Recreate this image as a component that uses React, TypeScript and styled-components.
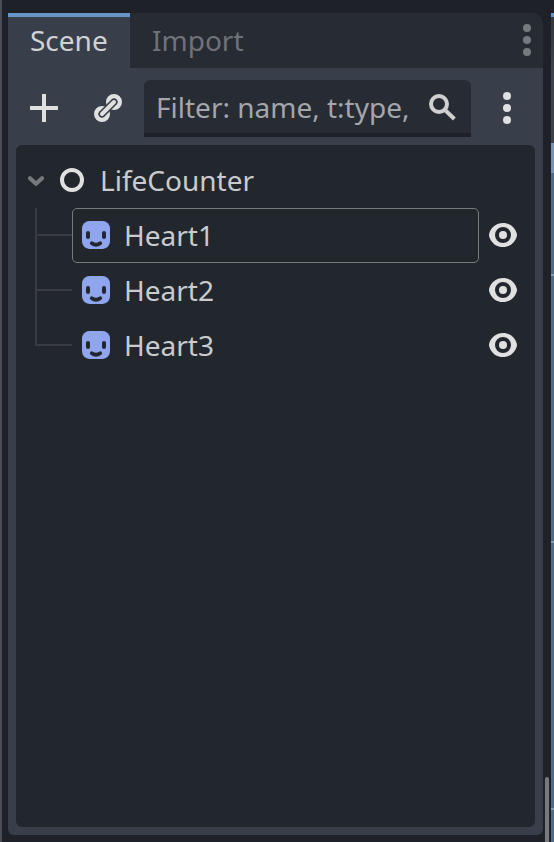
import React from "react";
import styled, { createGlobalStyle } from "styled-components";

const GlobalStyle = createGlobalStyle`
  *, *::before, *::after { box-sizing: border-box; }
  body {
    margin: 0;
    background: #1e2128;
    font-family: "Noto Sans", sans-serif;
    font-size: 28px;
    line-height: 38px;
    overflow: hidden;
  }
`;

const Editor = styled.main`
  display: flex;
  width: 554px;
  height: 842px;
  background: #1e2128;
`;

const LeftEdge = styled.div`
  flex: 0 0 2px;
  background: #4a4d53;
`;

const Dock = styled.section`
  display: flex;
  flex-direction: column;
  width: 535px;
  margin: 13px 0 7px 6px;
  background: #383e4a;
  border-radius: 0 12px 6px 6px;
  overflow: hidden;
`;

const TabBar = styled.div`
  display: flex;
  flex: 0 0 55px;
  background: #272b33;
`;

const Tab = styled.div<{ $active?: boolean }>`
  padding: ${(p) => (p.$active ? "4px 22px 0" : "8px 22px 0")};
  width: ${(p) => (p.$active ? "122px" : "auto")};
  border-top: ${(p) => (p.$active ? "4px solid #6895c7" : "0")};
  background: ${(p) => (p.$active ? "#383e4a" : "transparent")};
  color: ${(p) => (p.$active ? "#cfd1d3" : "#6f7278")};
`;

const TabMenu = styled.div`
  margin: 11px 0 0 auto;
  height: 32px;
`;

const Toolbar = styled.div`
  display: flex;
  align-items: flex-start;
  flex: 0 0 77px;
  padding-top: 12px;
`;

const ToolButton = styled.div<{ $left: number }>`
  margin: 12px 0 0 ${(p) => p.$left}px;
  height: 32px;
`;

const FilterField = styled.div`
  display: flex;
  justify-content: space-between;
  width: 327px;
  height: 57px;
  margin-left: 20px;
  padding: 8px 12px 0;
  background: #272b33;
  border-bottom: 4px solid #1e2128;
  border-radius: 6px 6px 0 0;
  color: #a3a6aa;
  white-space: nowrap;
`;

const FilterIcon = styled.div`
  margin-top: 4px;
  height: 32px;
`;

const Tree = styled.div`
  flex: 1;
  margin: 0 8px 8px;
  padding-top: 8px;
  background: #22272e;
  border-radius: 6px;
  color: #c9cbcd;
`;

const Row = styled.div`
  display: flex;
  height: 55px;
`;

const RootRow = styled(Row)`
  align-items: flex-start;
  padding: 11px 0 0 8px;
`;

const NodeName = styled.span`
  margin: -3px 0 0 12px;
`;

const Guide = styled.div<{ $last: boolean }>`
  width: 37px;
  margin-left: 19px;
  &::before, &::after {
    content: "";
    display: block;
    border-left: 2px solid #383b43;
  }
  &::before {
    height: 28px;
    border-bottom: 2px solid #383b43;
  }
  &::after {
    height: ${(p) => (p.$last ? 0 : 27)}px;
  }
`;

const NodeItem = styled.div<{ $focused: boolean }>`
  display: flex;
  align-items: flex-start;
  width: 407px;
  padding: 10px 0 0 7px;
  border: 1px solid ${(p) => (p.$focused ? "#777a7f" : "transparent")};
  border-radius: 5px;
`;

const Visibility = styled.div`
  margin: 11px 0 0 8px;
  height: 32px;
`;

const Gutter = styled.div`
  flex: 0 0 8px;
  padding: 777px 2px 0;
`;

const ScrollGrabber = styled.div`
  height: 65px;
  background: #777a7d;
  border-radius: 2px 2px 0 0;
`;

const Viewport = styled.div`
  width: 3px;
  margin-top: 13px;
  border-top: 4px solid #6895c7;
  background: #4b6c8d;
`;

const ViewportToolbar = styled.div`
  height: 126px;
  background: linear-gradient(#303740, #3c454f 45%, #3b424b);
`;

const ViewportRuler = styled.div`
  height: 30px;
  background: #7295b9;
`;

const GridCell = styled.div<{ $height: number }>`
  height: ${(p) => p.$height}px;
  border-bottom: 2px solid #7e9dbd;
`;

const Icon = styled.svg`
  display: block;
  flex: none;
  width: 32px;
  height: 32px;
`;

const DotsIcon = ({ color }: { color: string }) => (
  <Icon viewBox="0 0 16 16" fill={color}>
    <circle cx="8" cy="2" r="2" />
    <circle cx="8" cy="8" r="2" />
    <circle cx="8" cy="14" r="2" />
  </Icon>
);

const AddIcon = () => (
  <Icon viewBox="0 0 16 16">
    <path fill="#e0e0e0" d="M7 1v6H1v2h6v6h2V9h6V7H9V1z" />
  </Icon>
);

const LinkIcon = () => (
  <Icon viewBox="0 0 16 16" fill="none" strokeLinecap="round">
    <g stroke="#e0e0e0" strokeWidth="2.4">
      <circle cx="11" cy="5" r="2.8" />
      <circle cx="5" cy="11" r="2.8" />
    </g>
    <path stroke="#383e4a" strokeWidth="3.6" d="m5 11 6-6" />
    <path stroke="#e0e0e0" strokeWidth="2" d="m5 11 6-6" />
  </Icon>
);

const SearchIcon = () => (
  <Icon viewBox="0 0 16 16" fill="none" stroke="#cfcfcf" strokeWidth="2">
    <circle cx="6" cy="6" r="4" />
    <path d="m8.6 8.6 5.1 4.9" />
  </Icon>
);

const ArrowIcon = () => (
  <Icon viewBox="0 0 16 16" fill="none" stroke="#76797d" strokeWidth="2.1" strokeLinecap="round" strokeLinejoin="round">
    <path d="m3 7.1 3 2.8 3-2.8" />
  </Icon>
);

const NodeIcon = () => (
  <Icon viewBox="0 0 16 16">
    <circle cx="8" cy="8" r="5" fill="none" stroke="#e0e0e0" strokeWidth="2" />
  </Icon>
);

const SpriteIcon = () => (
  <Icon viewBox="0 0 16 16">
    <rect x="1" y="1" width="14" height="14" rx="3.7" fill="#8fa6ee" />
    <rect x="3" y="6" width="2" height="4" rx="1" fill="#22272e" />
    <rect x="11" y="6" width="2" height="4" rx="1" fill="#22272e" />
    <path d="M5.9 12.1q2.1 1.5 4.2 0" fill="none" stroke="#22272e" strokeWidth="1.9" strokeLinecap="round" />
  </Icon>
);

const EyeIcon = () => (
  <Icon viewBox="0 0 16 16" fill="#e0e0e0">
    <path fillRule="evenodd" d="M8 2C4.6 2 2 4.2 1.1 7.3a2.7 2.7 0 0 0 0 1.4C2 11.8 4.6 14 8 14s6-2.2 6.9-5.3a2.7 2.7 0 0 0 0-1.4C14 4.2 11.4 2 8 2zm0 2a4 4 0 0 1 0 8 4 4 0 0 1 0-8z" />
    <circle cx="8" cy="8" r="2" />
  </Icon>
);

const hearts = ["Heart1", "Heart2", "Heart3"];

export default function App() {
  return (
    <>
      <GlobalStyle />
      <Editor>
        <LeftEdge />
        <Dock>
          <TabBar>
            <Tab $active>Scene</Tab>
            <Tab>Import</Tab>
            <TabMenu><DotsIcon color="#76797d" /></TabMenu>
          </TabBar>
          <Toolbar>
            <ToolButton $left={20}><AddIcon /></ToolButton>
            <ToolButton $left={32}><LinkIcon /></ToolButton>
            <FilterField>
              <span>Filter: name, t:type,</span>
              <FilterIcon><SearchIcon /></FilterIcon>
            </FilterField>
            <ToolButton $left={20}><DotsIcon color="#e0e0e0" /></ToolButton>
          </Toolbar>
          <Tree>
            <RootRow>
              <ArrowIcon />
              <NodeIcon />
              <NodeName>LifeCounter</NodeName>
            </RootRow>
            {hearts.map((name, i) => (
              <Row key={name}>
                <Guide $last={i === hearts.length - 1} />
                <NodeItem $focused={i === 0}>
                  <SpriteIcon />
                  <NodeName>{name}</NodeName>
                </NodeItem>
                <Visibility><EyeIcon /></Visibility>
              </Row>
            ))}
          </Tree>
        </Dock>
        <Gutter><ScrollGrabber /></Gutter>
        <Viewport>
          <ViewportToolbar />
          <ViewportRuler />
          <GridCell $height={103} />
          <GridCell $height={267} />
          <GridCell $height={267} />
        </Viewport>
      </Editor>
    </>
  );
}
